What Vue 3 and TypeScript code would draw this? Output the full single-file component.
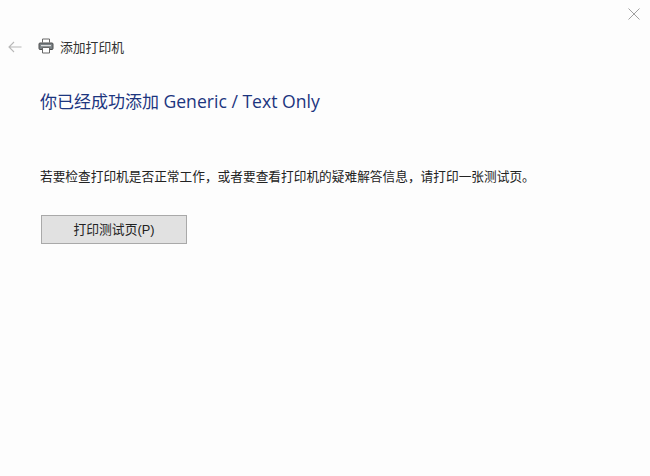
<script setup lang="ts">
const title = '你已经成功添加'
const titleLatin = 'Generic / Text Only'
const message = '若要检查打印机是否正常工作\uFF0C或者要查看打印机的疑难解答信息\uFF0C请打印一张测试页。'
</script>

<template>
  <div class="window">
    <button class="close" aria-label="关闭">
      <svg width="12" height="12" viewBox="0 0 12 12"><path d="M.5.5l11 11M11.5.5l-11 11" stroke="#a0a0a0" stroke-width="1" fill="none" /></svg>
    </button>
    <header class="bar">
      <svg class="back" width="14" height="12" viewBox="0 0 14 12"><path d="M13.5 6H1M6 1 1 6l5 5" stroke="#b8b8b8" stroke-width="1.1" fill="none" /></svg>
      <svg class="printer" width="16" height="16" viewBox="0 0 16 16">
        <path d="M4.5 4.5V1h7v3.5" fill="#fff" stroke="#666" stroke-width="1" />
        <rect x="1" y="5" width="14" height="6.5" rx="1" fill="#7b8286" stroke="#4d4d4d" stroke-width="1" />
        <rect x="3" y="7" width="10" height="1.2" fill="#dcdcdc" />
        <path d="M4.5 9.5h7V15h-7z" fill="#fff" stroke="#666" stroke-width="1" />
      </svg>
      <span class="bar-title">添加打印机</span>
    </header>
    <main class="content">
      <h1 class="title">{{ title }} <span class="latin">{{ titleLatin }}</span></h1>
      <p class="message" lang="zh-CN">{{ message }}</p>
      <button class="test">打印测试页(P)</button>
    </main>
  </div>
</template>

<style scoped>
.window {
  position: relative;
  box-sizing: border-box;
  width: 650px;
  height: 476px;
  background: #fdfdfd;
  font-family: "Liberation Sans", "Noto Sans CJK SC", sans-serif;
  color: #222;
  overflow: hidden;
}
.close {
  position: absolute;
  top: 8px;
  right: 10px;
  padding: 0;
  border: 0;
  background: none;
  line-height: 0;
}
.bar {
  display: flex;
  align-items: center;
  height: 20px;
  padding: 36px 0 0 8px;
}
.back { margin: 2px 16px 0 0; }
.printer { margin-right: 6px; }
.bar-title { font-size: 12.8px; color: #333; }
.content {
  display: flex;
  flex-direction: column;
  align-items: flex-start;
  padding: 0 0 0 40px;
}
.title {
  margin: 34px 0 0;
  font-size: 17px;
  line-height: 22px;
  font-weight: 400;
  color: #1c357f;
  font-family: "Open Sans", "Noto Sans CJK SC", sans-serif;
}
.latin { font-size: 17.6px; }
.message {
  margin: 55px 0 0;
  font-size: 12.7px;
  line-height: 18px;
  color: #222;
  white-space: nowrap;
}
.test {
  box-sizing: border-box;
  width: 146px;
  height: 29px;
  margin: 29px 0 0 1px;
  border: 1px solid #a9a9a9;
  background: #e1e1e1;
  font: inherit;
  font-size: 12.8px;
  color: #222;
  padding: 0 0 3px;
}
</style>
